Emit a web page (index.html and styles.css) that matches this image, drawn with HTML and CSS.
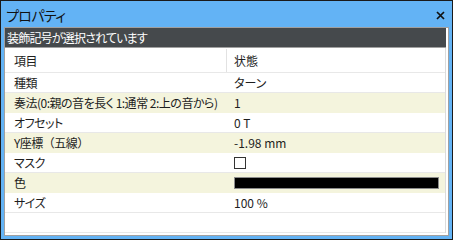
FILE: index.html
```html
<!DOCTYPE html>
<html lang="ja">
<head>
    <meta charset="UTF-8">
    <meta name="viewport" content="width=device-width, initial-scale=1.0">
    <title>プロパティ</title>
    <link rel="stylesheet" href="styles.css">
</head>
<body>
    <div class="window">
        <div class="titlebar">
            <span class="title">プロパティ</span>
            <svg class="close" width="9" height="9" viewBox="0 0 9 9">
                <path d="M1 1 L8 8 M8 1 L1 8" stroke="#111" stroke-width="1.7" fill="none"/>
            </svg>
        </div>

        <div class="panel">
            <div class="caption">装飾記号が選択されています</div>

            <div class="table">
                <div class="row head">
                    <div class="cell name">項目</div>
                    <div class="cell">状態</div>
                </div>
                <div class="row">
                    <div class="cell name">種類</div>
                    <div class="cell">ターン</div>
                </div>
                <div class="row alt">
                    <div class="cell name">奏法(0:親の音を長く 1:通常 2:上の音から)</div>
                    <div class="cell">1</div>
                </div>
                <div class="row">
                    <div class="cell name">オフセット</div>
                    <div class="cell">0 T</div>
                </div>
                <div class="row alt">
                    <div class="cell name full">Y座標（五線）</div>
                    <div class="cell">-1.98 mm</div>
                </div>
                <div class="row">
                    <div class="cell name">マスク</div>
                    <div class="cell"><span class="checkbox"></span></div>
                </div>
                <div class="row alt">
                    <div class="cell name">色</div>
                    <div class="cell"><span class="swatch"></span></div>
                </div>
                <div class="row">
                    <div class="cell name">サイズ</div>
                    <div class="cell">100 %</div>
                </div>
                <div class="row">
                    <div class="cell name"></div>
                    <div class="cell"></div>
                </div>
            </div>
        </div>
    </div>
</body>
</html>
```

FILE: styles.css
```css
body {
    margin: 0;
    font-family: "Noto Sans CJK JP", "Noto Sans", sans-serif;
    font-feature-settings: "palt";
    color: #1e1e1e;
}
.window {
    width: 453px;
    height: 240px;
    box-sizing: border-box;
    border: 1px solid #1a1a1a;
    background-color: #63b3f5;
    padding: 0 3px 3px 3px;
    display: flex;
    flex-direction: column;
}
.titlebar {
    height: 26px;
    display: flex;
    align-items: center;
    justify-content: space-between;
    padding: 0 4px 0 2px;
}
.title {
    font-size: 14px;
    letter-spacing: -0.6px;
    color: #111;
    margin-top: 1px;
}
.close {
    margin-top: 3px;
}
.panel {
    flex: 1;
    border: 1px solid #a0a0a0;
    background-color: #fff;
    padding-right: 2px;
    display: flex;
    flex-direction: column;
}
.caption {
    height: 19px;
    border-bottom: 1px solid #a0a0a0;
    background-color: #45494c;
    color: #fff;
    font-size: 12px;
    letter-spacing: -0.8px;
    line-height: 19px;
    padding-left: 2px;
}
.table {
    border-right: 1px solid #dcdcdc;
}
.row {
    display: grid;
    grid-template-columns: 222px 1fr;
    height: 20px;
    box-sizing: border-box;
    border-bottom: 1px solid #e8e8e8;
    font-size: 12px;
}
.row.alt {
    background-color: #f4f4dd;
    border-bottom-color: #f4f4dd;
}
.row.head {
    height: 25px;
    padding-top: 1px;
}
.row.head .name {
    border-right: 1px solid #e2e2e2;
}
.cell {
    display: flex;
    align-items: center;
    padding-left: 7px;
    white-space: nowrap;
}
.cell.name {
    padding-left: 9px;
    letter-spacing: -0.5px;
}
.cell.full {
    font-feature-settings: normal;
}
.checkbox {
    width: 10px;
    height: 10px;
    border: 1px solid #333;
    background-color: #fff;
}
.swatch {
    flex: 1;
    height: 10px;
    margin-right: 6px;
    border: 1px solid #8c8c8c;
    background-color: #000;
}
```
